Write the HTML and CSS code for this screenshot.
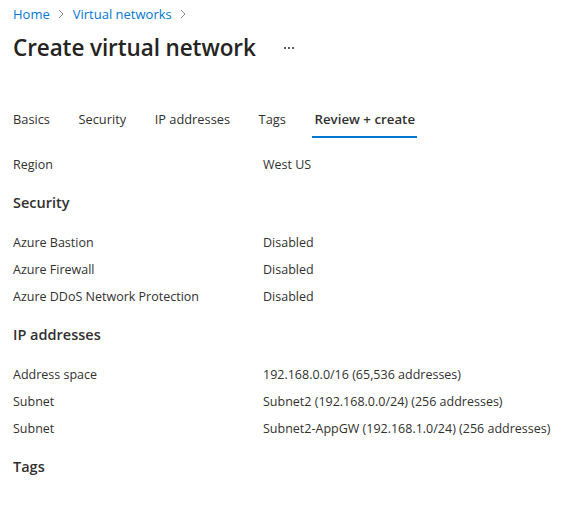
FILE: index.html
```html
<!DOCTYPE html>
<html lang="en">
<head>
<meta charset="utf-8">
<title>Create virtual network</title>
<link rel="stylesheet" href="styles.css">
</head>
<body>
<div class="page">
  <nav class="crumbs">
    <a class="crumb">Home</a>
    <span class="chev"><svg width="8" height="10" viewBox="0 0 8 10"><path d="M2 1l4 4-4 4" fill="none" stroke="#8a8886" stroke-width="1"/></svg></span>
    <a class="crumb">Virtual networks</a>
    <span class="chev"><svg width="8" height="10" viewBox="0 0 8 10"><path d="M2 1l4 4-4 4" fill="none" stroke="#8a8886" stroke-width="1"/></svg></span>
  </nav>
  <div class="titlebar">
    <h1 class="title">Create virtual network</h1>
    <span class="more"><i></i><i></i><i></i></span>
  </div>
  <div class="tabs">
    <span class="tab">Basics</span>
    <span class="tab">Security</span>
    <span class="tab">IP addresses</span>
    <span class="tab">Tags</span>
    <span class="tab active">Review + create</span>
  </div>
  <div class="row first"><span class="label">Region</span><span class="value">West US</span></div>
  <h2 class="section">Security</h2>
  <div class="row"><span class="label">Azure Bastion</span><span class="value">Disabled</span></div>
  <div class="row"><span class="label">Azure Firewall</span><span class="value">Disabled</span></div>
  <div class="row"><span class="label">Azure DDoS Network Protection</span><span class="value">Disabled</span></div>
  <h2 class="section">IP addresses</h2>
  <div class="row"><span class="label">Address space</span><span class="value">192.168.0.0/16 (65,536 addresses)</span></div>
  <div class="row"><span class="label">Subnet</span><span class="value">Subnet2 (192.168.0.0/24) (256 addresses)</span></div>
  <div class="row"><span class="label">Subnet</span><span class="value">Subnet2-AppGW (192.168.1.0/24) (256 addresses)</span></div>
  <h2 class="section">Tags</h2>
</div>
</body>
</html>
```
FILE: styles.css
```css
html, body {
  margin: 0;
  padding: 0;
  background: #ffffff;
}
body {
  font-family: "Open Sans", "Noto Sans", sans-serif;
  color: #323130;
  font-size: 12.5px;
}
.page {
  padding: 4px 0 0 13px;
}
.crumbs {
  display: flex;
  align-items: center;
  height: 20px;
  gap: 8px;
}
.crumb {
  color: #0078d4;
  font-size: 13px;
}
.chev {
  display: flex;
  align-items: center;
  margin-left: -1px;
}
.titlebar {
  display: flex;
  align-items: center;
  margin-top: 10px;
  height: 26px;
}
.title {
  margin: 0;
  font-size: 22.5px;
  font-weight: 600;
  color: #252423;
  letter-spacing: -0.1px;
}
.more {
  display: flex;
  gap: 2px;
  margin-left: 28px;
  margin-top: 2px;
}
.more i {
  width: 2px;
  height: 2px;
  background: #605e5c;
}
.tabs {
  display: flex;
  margin-top: 46px;
  height: 32px;
}
.tab {
  padding: 4px 0 0 0;
  margin-right: 28.6px;
  font-size: 12.8px;
  line-height: 18px;
  box-sizing: border-box;
}
.tab.active {
  font-weight: 600;
  font-size: 13.3px;
  border-bottom: 2px solid #0078d4;
  padding: 4px 2px 0 2px;
  margin-left: -2px;
  height: 32px;
}
.row {
  display: flex;
  height: 27px;
  align-items: center;
  white-space: nowrap;
}
.row.first {
  margin-top: 13px;
}
.label {
  width: 250px;
  flex: none;
}
.section {
  margin: 5px 0 7px 0;
  font-size: 14.5px;
  font-weight: 600;
  height: 39px;
  display: flex;
  align-items: center;
}
```
